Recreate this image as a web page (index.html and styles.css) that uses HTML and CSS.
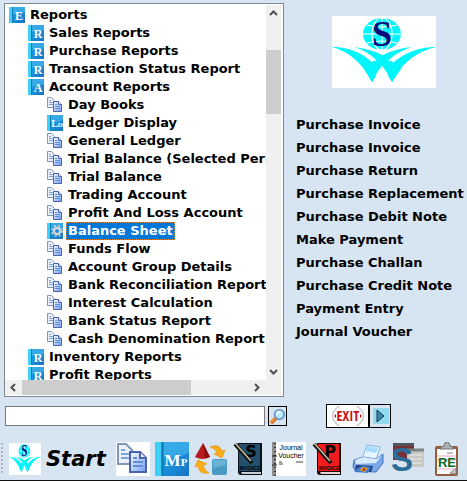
FILE: index.html
```html
<!DOCTYPE html>
<html lang="en">
<head>
    <meta charset="UTF-8">
    <meta name="viewport" content="width=device-width, initial-scale=1.0">
    <title>Reports</title>
    <link rel="stylesheet" href="styles.css">
</head>
<body>
    <!-- Shared icons -->
    <svg class="sprite" aria-hidden="true">
        <defs>
            <linearGradient id="blue" x1="0" y1="0" x2="1" y2="1">
                <stop offset="0" stop-color="#1f9fe0"/>
                <stop offset="0.55" stop-color="#1a8fdc"/>
                <stop offset="1" stop-color="#1673c4"/>
            </linearGradient>
            <linearGradient id="page" x1="0" y1="0" x2="1" y2="1">
                <stop offset="0" stop-color="#ffffff"/>
                <stop offset="1" stop-color="#6f9cf0"/>
            </linearGradient>
        </defs>
        <symbol id="book" viewBox="0 0 16 16">
            <rect width="16" height="16" fill="url(#blue)"/>
            <path d="M4 0h12v5q-6 3-12 2z" fill="#4ab8ee" opacity=".6"/>
            <rect width="3" height="16" fill="#3fd0f8"/>
            <rect x="3" width="1" height="16" fill="#1479b8"/>
        </symbol>
        <symbol id="docs" viewBox="0 0 16 16">
            <path d="M.5 .5h4l3 3v7h-7z" fill="#eaf1fc" stroke="#8196b8"/>
            <path d="M2 3.500h2M2 5.500h4M2 7.500h4" stroke="#7da5dc"/>
            <path d="M6.500 4.500h5l3 3v7h-8z" fill="url(#page)" stroke="#4a63b0"/>
            <path d="M11.500 4.500v3h3" fill="#e8f0ff" stroke="#4a63b0"/>
            <path d="M8 7.500h2M8 9.500h5M8 11.500h5" stroke="#5f8fdc"/>
        </symbol>
        <symbol id="logo" viewBox="0 0 104 72" preserveAspectRatio="none">
            <rect width="104" height="72" fill="#fff"/>
            <ellipse cx="50" cy="18" rx="19" ry="16" fill="#00f6fa"/>
            <g fill="none" stroke="#fff" stroke-width="1.200">
                <ellipse cx="50" cy="18" rx="10" ry="16"/>
                <path d="M50 2v32M31 18h38M35 9q15 4 30 0M35 27q15-4 30 0"/>
            </g>
            <text x="50" y="30" text-anchor="middle" class="logo-letter">S</text>
            <g fill="#00f6fa">
                <path d="M0 31C22 31 38 41 47 55l-7 11Q26 38 0 31z"/>
                <path d="M104 31C82 31 64 41 54 55l6 11Q74 38 104 31z"/>
                <path d="M18 31C38 32 54 38 69 53l-9 13Q44 37 18 31z"/>
                <path d="M82 31C64 32 47 38 32 53l8 13Q56 37 82 31z"/>
            </g>
            <path d="M20 31Q36 36 44 45M82 31Q66 36 57 45" fill="none" stroke="#fff" stroke-width="1.500"/>
            <path d="M50 50l-6 9M50 50l6 9" fill="none" stroke="#fff"/>
        </symbol>
    </svg>

    <main class="main">
        <section class="tree-box">
            <ul class="tree">
                <li class="l0"><svg class="icon"><use href="#book"/><text x="10" y="13">E</text></svg><a href="#">Reports</a></li>
                <li class="l1"><svg class="icon"><use href="#book"/><text x="10" y="13">R</text></svg><a href="#">Sales Reports</a></li>
                <li class="l1"><svg class="icon"><use href="#book"/><text x="10" y="13">R</text></svg><a href="#">Purchase Reports</a></li>
                <li class="l1"><svg class="icon"><use href="#book"/><text x="10" y="13">R</text></svg><a href="#">Transaction Status Report</a></li>
                <li class="l1"><svg class="icon"><use href="#book"/><text x="10" y="13">A</text></svg><a href="#">Account Reports</a></li>
                <li class="l2"><svg class="icon"><use href="#docs"/></svg><a href="#">Day Books</a></li>
                <li class="l2"><svg class="icon"><use href="#book"/><text x="10" y="12" class="small">L<tspan class="tiny">D</tspan></text></svg><a href="#">Ledger Display</a></li>
                <li class="l2"><svg class="icon"><use href="#docs"/></svg><a href="#">General Ledger</a></li>
                <li class="l2"><svg class="icon"><use href="#docs"/></svg><a href="#">Trial Balance (Selected Period)</a></li>
                <li class="l2"><svg class="icon"><use href="#docs"/></svg><a href="#">Trial Balance</a></li>
                <li class="l2"><svg class="icon"><use href="#docs"/></svg><a href="#">Trading Account</a></li>
                <li class="l2"><svg class="icon"><use href="#docs"/></svg><a href="#">Profit And Loss Account</a></li>
                <li class="l2">
                    <svg class="icon"><use href="#book"/><circle cx="10" cy="8" r="3" fill="none" stroke="#dcdcdc" stroke-width="2"/><circle cx="10" cy="8" r="5" fill="none" stroke="#c4c9cc" stroke-width="2" stroke-dasharray="2 2"/></svg>
                    <a href="#" class="selected">Balance Sheet</a>
                </li>
                <li class="l2"><svg class="icon"><use href="#docs"/></svg><a href="#">Funds Flow</a></li>
                <li class="l2"><svg class="icon"><use href="#docs"/></svg><a href="#">Account Group Details</a></li>
                <li class="l2"><svg class="icon"><use href="#docs"/></svg><a href="#">Bank Reconciliation Report</a></li>
                <li class="l2"><svg class="icon"><use href="#docs"/></svg><a href="#">Interest Calculation</a></li>
                <li class="l2"><svg class="icon"><use href="#docs"/></svg><a href="#">Bank Status Report</a></li>
                <li class="l2"><svg class="icon"><use href="#docs"/></svg><a href="#">Cash Denomination Report</a></li>
                <li class="l1"><svg class="icon"><use href="#book"/><text x="10" y="13">R</text></svg><a href="#">Inventory Reports</a></li>
                <li class="l1"><svg class="icon"><use href="#book"/><text x="10" y="13">R</text></svg><a href="#">Profit Reports</a></li>
            </ul>
            <div class="scroll-v">
                <button class="arrow" aria-label="Scroll up"><svg viewBox="0 0 9 9"><path d="M1 6l3.500-3.500L8 6"/></svg></button>
                <div class="thumb"></div>
                <button class="arrow" aria-label="Scroll down"><svg viewBox="0 0 9 9"><path d="M1 3l3.500 3.500L8 3"/></svg></button>
            </div>
            <div class="scroll-h">
                <button class="arrow" aria-label="Scroll left"><svg viewBox="0 0 9 9"><path d="M6 1L2.500 4.500 6 8"/></svg></button>
                <div class="thumb"></div>
                <button class="arrow" aria-label="Scroll right"><svg viewBox="0 0 9 9"><path d="M3 1l3.500 3.500L3 8"/></svg></button>
            </div>
        </section>

        <aside class="side">
            <svg class="side-logo" role="img" aria-label="Company logo"><use href="#logo"/></svg>
            <nav class="links">
                <a href="#">Purchase Invoice</a>
                <a href="#">Purchase Invoice</a>
                <a href="#">Purchase Return</a>
                <a href="#">Purchase Replacement</a>
                <a href="#">Purchase Debit Note</a>
                <a href="#">Make Payment</a>
                <a href="#">Purchase Challan</a>
                <a href="#">Purchase Credit Note</a>
                <a href="#">Payment Entry</a>
                <a href="#">Journal Voucher</a>
            </nav>
        </aside>
    </main>

    <div class="search-row">
        <div class="search">
            <input type="text" aria-label="Search">
            <button class="btn find" aria-label="Find">
                <svg viewBox="0 0 18 18">
                    <path d="M2 16l6-6" stroke="#c9701c" stroke-width="4"/>
                    <path d="M2 15l5-5" stroke="#ff9b37" stroke-width="2"/>
                    <circle cx="11" cy="7" r="5" fill="#b6ecff" stroke="#6a94c8" stroke-width="2"/>
                    <path d="M8 7q0-3 4-3" fill="none" stroke="#fff" stroke-width="2"/>
                </svg>
            </button>
        </div>
        <div class="exit-group">
            <button class="btn exit" aria-label="Exit">
                <svg viewBox="0 0 41 22">
                    <rect width="41" height="22" fill="#fff"/>
                    <path d="M12 1Q-1 11 12 21M30 1q13 10 0 20" fill="none" stroke="#c9cdcf" stroke-width="1.500"/>
                    <path d="M9 9l-2 2 2 2zM33 9l2 2-2 2z" fill="#c81414"/>
                    <text x="21" y="16" text-anchor="middle" class="exit-text">EXIT</text>
                </svg>
            </button>
            <button class="btn play" aria-label="Go">
                <svg viewBox="0 0 20 22">
                    <rect x="3" y="3" width="16" height="16" fill="#93daee"/>
                    <path d="M7 5v12l7-6z" fill="#3f87a8" stroke="#14304c"/>
                </svg>
            </button>
        </div>
    </div>

    <footer class="toolbar">
        <div class="grip"></div>
        <button class="start">
            <svg class="start-logo"><use href="#logo"/></svg>
            <span>Start</span>
        </button>
        <div class="tools">
            <button class="tool" aria-label="Day books">
                <svg viewBox="0 0 34 34"><rect width="34" height="34" fill="#fff"/><use href="#docs" width="34" height="32" y="1"/></svg>
            </button>
            <button class="tool" aria-label="Make payment">
                <svg viewBox="0 0 34 34"><use href="#book" width="34" height="34"/><text x="21" y="24" text-anchor="middle" class="mp">M<tspan class="mp-sub">P</tspan></text></svg>
            </button>
            <button class="tool" aria-label="Exchange">
                <svg viewBox="0 0 34 34">
                    <path d="M9 1L1 15q8 4 15 0z" fill="#b81a1a"/>
                    <path d="M9 1l2 15 5-1z" fill="#8c0d12"/>
                    <path d="M16 5q9-4 12 4l3-1-3 8-8-4 3-1q-2-5-7-6z" fill="#f9ac15" stroke="#e08c08" stroke-width=".6"/>
                    <path d="M15 31q-10 2-11-7l-3 1 3-7 9 4-4 1q1 5 6 8z" fill="#f9ac15" stroke="#e08c08" stroke-width=".6"/>
                    <rect x="18" y="17" width="15" height="16" rx="2" fill="#4a9cc4"/>
                    <path d="M19 18h13v5l-13 3z" fill="#6ab2d4"/>
                </svg>
            </button>
            <button class="tool" aria-label="Sales invoice">
                <svg viewBox="0 0 34 34">
                    <path d="M5 1h24v32H8q-3 0-3-3z" fill="#0a1218"/>
                    <path d="M6 2h21v27H6z" fill="#23506c"/>
                    <path d="M8 30h20v2H9z" fill="#c8d0d6"/>
                    <text x="18" y="15" text-anchor="middle" class="cover">S</text>
                    <text x="17" y="28" text-anchor="middle" class="cover-label">INVOICE</text>
                    <path d="M2 2l17 19" stroke="#111" stroke-width="4"/>
                    <path d="M2 1l16 18" stroke="#c9c2a4" stroke-width="1.500"/>
                </svg>
            </button>
            <button class="tool" aria-label="Journal voucher">
                <svg viewBox="0 0 34 34">
                    <rect width="34" height="34" fill="#fff"/>
                    <rect width="4" height="34" fill="#8d8d8d"/>
                    <path d="M3 1v33" stroke="#333" stroke-width="2" stroke-dasharray="1 3"/>
                    <path d="M0 14h5M0 23h5" stroke="#222"/>
                    <text x="19" y="8" text-anchor="middle" class="voucher">Journal</text>
                    <text x="19" y="16" text-anchor="middle" class="voucher">Voucher</text>
                    <path d="M7 20h3M7 22h4M24 20h7" stroke="#444"/>
                </svg>
            </button>
            <button class="tool" aria-label="Purchase invoice">
                <svg viewBox="0 0 34 34">
                    <path d="M5 1h24v32H8q-3 0-3-3z" fill="#180808"/>
                    <path d="M6 2h21v27H6z" fill="#f01c20"/>
                    <path d="M8 30h20v2H9z" fill="#e6d8d8"/>
                    <text x="18" y="15" text-anchor="middle" class="cover">P</text>
                    <text x="17" y="28" text-anchor="middle" class="cover-label">INVOICE</text>
                    <path d="M2 2l17 19" stroke="#111" stroke-width="4"/>
                    <path d="M2 1l16 18" stroke="#c9c2a4" stroke-width="1.500"/>
                </svg>
            </button>
            <button class="tool" aria-label="Print">
                <svg viewBox="0 0 34 34">
                    <path d="M16 3l13 2-4 13-14-1z" fill="#eaf6ff" stroke="#7eb6ee"/>
                    <path d="M16 4l11 2-2 5-11-2z" fill="#a8dcff"/>
                    <path d="M3 18l9-3 13 2 7-5v9l-7 9-20-1-3-4z" fill="#79a8ea" stroke="#456fc0"/>
                    <path d="M4 18l8-3 13 2 6-4-6 8-20 1z" fill="#d8ebff"/>
                    <path d="M5 23l17 1-2 6-16-2z" fill="#283a78"/>
                    <path d="M3 28l8-4 9 1-3 6-13-1z" fill="#3b7fce"/>
                    <path d="M8 28l4-3 5 1-3 4z" fill="#e59b24"/>
                    <path d="M11 28l2-2 2 1-2 2z" fill="#a12f2d"/>
                </svg>
            </button>
            <button class="tool" aria-label="Settings">
                <svg viewBox="0 0 34 34">
                    <rect x="3" y="1" width="21" height="17" fill="#7b3038"/>
                    <path d="M3 1h21v3H3z" fill="#51555c"/>
                    <rect x="17" y="7" width="17" height="18" fill="#c8c9c5"/>
                    <path d="M17 8h17" stroke="#7e8583" stroke-width="3"/>
                    <path d="M20 13h12M20 17h12M20 21h12" stroke="#edeeea"/>
                    <text x="12" y="29" text-anchor="middle" class="big-s">S</text>
                </svg>
            </button>
            <button class="tool" aria-label="Reports">
                <svg viewBox="0 0 34 34">
                    <rect x="6" y="4" width="23" height="30" rx="2" fill="#945d3b"/>
                    <path d="M8 7h19v25H8z" fill="#fff"/>
                    <path d="M8 14h19M8 18h19M8 27h17" stroke="#f0a8c4"/>
                    <path d="M11 7q1-3 4-3 0-4 3-4t3 4q3 0 4 3z" fill="#aeb2b3" stroke="#6d7274"/>
                    <path d="M18 11h6M21 31l6-5v6z" fill="#c9c9c9" stroke="#888"/>
                    <text x="18" y="25" text-anchor="middle" class="re">RE</text>
                </svg>
            </button>
        </div>
    </footer>
</body>
</html>
```
FILE: styles.css
```css
* {
    box-sizing: border-box;
}
body {
    margin: 0;
    height: 100vh;
    min-height: 320px;
    display: flex;
    flex-direction: column;
    background-color: #d7e4f2;
    color: #000;
    font-family: Verdana, "DejaVu Sans", sans-serif;
    font-size: 13px;
    font-weight: bold;
    overflow: hidden;
}
a {
    color: inherit;
    text-decoration: none;
    white-space: nowrap;
}
button {
    padding: 0;
    border: none;
    background: none;
    font: inherit;
    cursor: pointer;
}
svg {
    display: block;
}
.sprite {
    position: absolute;
    width: 0;
    height: 0;
}
.main {
    flex: 1;
    min-height: 0;
    display: flex;
    padding: 3px 0 0 4px;
}

/* Report tree */
.tree-box {
    flex: 1;
    min-width: 0;
    display: grid;
    grid-template-columns: minmax(0, 1fr) 15px;
    grid-template-rows: minmax(0, 1fr) 15px;
    padding: 1px 2px 1px 0;
    border: 1px solid #828790;
    background-color: #fff;
}
.tree {
    margin: 0;
    padding: 1px 0 0 4px;
    list-style: none;
    overflow: hidden;
}
.tree li {
    display: flex;
    align-items: center;
    gap: 3px;
    height: 18px;
}
.tree a {
    height: 18px;
    padding: 0 2px;
    line-height: 18px;
}
.tree .selected {
    background-color: #0078d7;
    color: #fff;
    outline: 1px dotted #e08a3c;
    outline-offset: -1px;
}
.l1 {
    margin-left: 19px;
}
.l2 {
    margin-left: 38px;
}
.icon {
    flex: none;
    width: 16px;
    height: 16px;
}
.icon text {
    fill: #fff;
    font: bold 12px "Liberation Serif", serif;
    text-anchor: middle;
}
.icon .small {
    font-size: 10px;
}
.icon .tiny {
    font-size: 7px;
}

/* Scrollbars */
.scroll-v,
.scroll-h {
    display: flex;
    background-color: #f0f0f0;
}
.scroll-v {
    flex-direction: column;
}
.scroll-h {
    grid-column: 1 / 3;
    padding-right: 16px;
}
.arrow {
    flex: none;
    display: flex;
    align-items: center;
    justify-content: center;
    width: 17px;
    height: 15px;
}
.scroll-v .arrow {
    width: 15px;
    height: 17px;
}
.arrow svg {
    width: 9px;
    height: 9px;
    fill: none;
    stroke: #505050;
    stroke-width: 2;
}
.thumb {
    background-color: #cdcdcd;
}
.scroll-v .thumb {
    height: 17%;
    margin: 28px 0 auto;
}
.scroll-h .thumb {
    width: 65%;
    margin-right: auto;
}

/* Shortcuts */
.side {
    flex: none;
    width: 183px;
    padding: 13px 0 0 12px;
}
.side-logo {
    width: 104px;
    height: 72px;
    margin: 0 0 25px 36px;
}
.logo-letter {
    fill: #0a0a78;
    font: bold 36px "Liberation Serif", serif;
}
.links {
    display: flex;
    flex-direction: column;
}
.links a {
    line-height: 23px;
}

/* Search and exit */
.search-row {
    display: flex;
    align-items: center;
    padding: 7px 0 10px 5px;
}
.search {
    flex: 1;
    display: flex;
    align-items: center;
    gap: 3px;
}
.search input {
    flex: 1;
    min-width: 0;
    height: 20px;
    padding: 0 4px;
    border: 1px solid #7a7a7a;
    background-color: #fff;
    font: inherit;
}
.btn {
    border: 1px solid #000;
}
.find {
    width: 19px;
    height: 20px;
}
.exit-group {
    flex: none;
    display: flex;
    width: 180px;
    padding-left: 39px;
}
.exit {
    width: 43px;
    height: 24px;
    background-color: #fff;
}
.exit-text {
    fill: #c81414;
    font: bold 14px "Liberation Sans Narrow", "Open Sans Condensed", sans-serif;
}
.play {
    width: 22px;
    height: 24px;
}

/* Bottom toolbar */
.toolbar {
    display: flex;
    align-items: center;
    height: 43px;
    padding: 0 4px 0 1px;
    border-bottom: 1px solid #111;
}
.grip {
    width: 2px;
    height: 32px;
    margin-right: 6px;
    background: repeating-linear-gradient(#b4b4b4 0 2px, transparent 2px 4px);
}
.start {
    display: flex;
    align-items: center;
    gap: 5px;
    font-size: 21px;
    font-style: italic;
}
.start-logo {
    width: 32px;
    height: 32px;
}
.tools {
    flex: 1;
    display: flex;
    justify-content: space-between;
    padding-left: 10px;
}
.tool svg {
    width: 34px;
    height: 34px;
}
.mp {
    fill: #fff;
    font: bold 17px "Liberation Serif", serif;
}
.mp-sub {
    font-size: 11px;
}
.cover {
    font: bold 16px "DejaVu Sans", sans-serif;
}
.cover-label {
    font: bold 5px "Liberation Sans", sans-serif;
}
.voucher {
    font: 7px "Liberation Sans", sans-serif;
}
.big-s {
    fill: #2c6c98;
    font: bold 33px "Liberation Sans", sans-serif;
}
.re {
    fill: #0b6b1e;
    font: bold 13px "Liberation Sans", sans-serif;
}
```
